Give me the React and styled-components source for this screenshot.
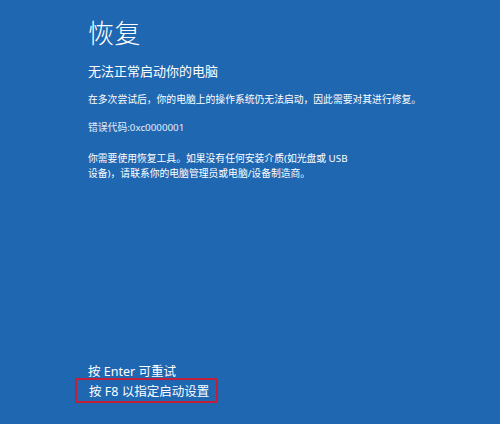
import React from "react";
import styled, { createGlobalStyle } from "styled-components";

const GlobalStyle = createGlobalStyle`
    html, body {
        margin: 0;
        padding: 0;
        background: #2067b2;
    }
    body {
        font-family: "Noto Sans", "Noto Sans CJK SC", sans-serif;
        color: #ffffff;
    }
`;

const Screen = styled.div`
    width: 500px;
    height: 424px;
    box-sizing: border-box;
    padding: 16px 0 21px 88px;
    background: #2067b2;
    display: flex;
    flex-direction: column;
    justify-content: space-between;
    overflow: hidden;
`;

const Top = styled.div`
    display: flex;
    flex-direction: column;
`;

const Title = styled.h1`
    margin: 0;
    font-size: 26px;
    line-height: 34px;
    font-weight: 300;
    letter-spacing: 0.5px;
`;

const Subtitle = styled.h2`
    margin: 12px 0 0;
    font-size: 13px;
    line-height: 18px;
    font-weight: 400;
`;

const Text = styled.p`
    margin: ${(p) => p.$gap || 0}px 0 0;
    font-size: 9.8px;
    line-height: 15px;
    font-weight: 400;
    color: ${(p) => (p.$dim ? "#e4ecf6" : "#ffffff")};
`;

const Footer = styled.div`
    display: flex;
    flex-direction: column;
    align-items: flex-start;
`;

const Option = styled.div`
    font-size: 12.5px;
    line-height: 12px;
`;

const Highlight = styled.div`
    margin-left: -13px;
    padding: 2px 7px 0 12px;
    line-height: 19px;
    font-size: 12.5px;
    border: 2px solid #c21f3a;
`;

export default function App() {
    return (
        <>
            <GlobalStyle />
            <Screen>
                <Top>
                    <Title>恢复</Title>
                    <Subtitle>无法正常启动你的电脑</Subtitle>
                    <Text $gap={11.5}>
                        在多次尝试后，你的电脑上的操作系统仍无法启动，因此需要对其进行修复。
                    </Text>
                    <Text $gap={13} $dim>
                        错误代码:0xc0000001
                    </Text>
                    <Text $gap={16}>
                        你需要使用恢复工具。如果没有任何安装介质(如光盘或 USB
                        <br />
                        设备)，请联系你的电脑管理员或电脑/设备制造商。
                    </Text>
                </Top>
                <Footer>
                    <Option>按 Enter 可重试</Option>
                    <Highlight>按 F8 以指定启动设置</Highlight>
                </Footer>
            </Screen>
        </>
    );
}
